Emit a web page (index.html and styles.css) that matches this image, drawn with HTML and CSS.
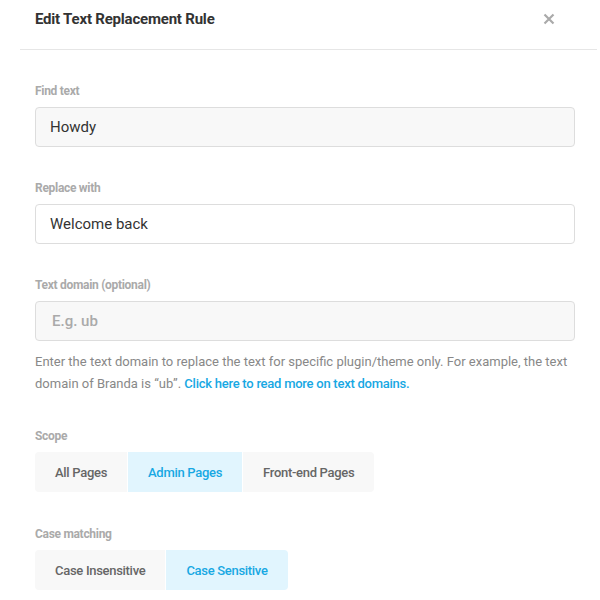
FILE: index.html
```html
<!DOCTYPE html>
<html>
<head>
<meta charset="utf-8">
<link rel="stylesheet" href="styles.css">
</head>
<body>
<div class="modal">
  <div class="header">
    <h1 class="title">Edit Text Replacement Rule</h1>
    <button class="close" aria-label="Close">
      <svg width="12" height="12" viewBox="0 0 12 12"><path d="M1.5 1.5 L10.5 10.5 M10.5 1.5 L1.5 10.5" stroke="#aaa" stroke-width="2.2" stroke-linecap="butt"/></svg>
    </button>
  </div>
  <div class="body">
    <div class="field">
      <label class="label">Find text</label>
      <div class="input filled">Howdy</div>
    </div>
    <div class="field">
      <label class="label">Replace with</label>
      <div class="input white">Welcome back</div>
    </div>
    <div class="field">
      <label class="label">Text domain (optional)</label>
      <div class="input filled placeholder">E.g. ub</div>
      <p class="desc">Enter the text domain to replace the text for specific plugin/theme only. For example, the text domain of Branda is “ub”. <a class="link" href="#">Click here to read more on text domains.</a></p>
    </div>
    <div class="field field-tabs">
      <label class="label">Scope</label>
      <div class="tabs">
        <span class="tab">All Pages</span>
        <span class="tab active">Admin Pages</span>
        <span class="tab">Front-end Pages</span>
      </div>
    </div>
    <div class="field">
      <label class="label">Case matching</label>
      <div class="tabs">
        <span class="tab">Case Insensitive</span>
        <span class="tab active">Case Sensitive</span>
      </div>
    </div>
  </div>
</div>
</body>
</html>
```
FILE: styles.css
```css
* { box-sizing: border-box; }
html, body { margin: 0; padding: 0; background: #fff; }
body { font-family: Roboto, "Liberation Sans", sans-serif; color: #333; }
.modal { padding-left: 20px; width: 597px; }
.header {
  display: flex; align-items: center; justify-content: space-between;
  height: 50px; padding: 0 42px 12px 15px;
  border-bottom: 1px solid #e6e6e6;
}
.title { margin: 0; font-size: 15px; font-weight: 700; color: #333; letter-spacing: -0.2px; }
.close { border: 0; background: none; padding: 0; width: 12px; height: 12px; display: flex; }
.body { padding: 33px 22px 0 15px; }
.field { margin-bottom: 33px; }
.field-tabs { margin-bottom: 34px; }
.label { display: block; font-size: 12px; line-height: 16px; font-weight: 700; color: #aaa; margin-bottom: 8px; letter-spacing: -0.3px; }
.input {
  height: 40px; border: 1px solid #ddd; border-radius: 4px;
  padding: 0 14px; display: flex; align-items: center;
  font-size: 15px; color: #333;
}
.filled { background: #f8f8f8; }
.white { background: #fff; }
.placeholder { color: #aaa; font-weight: 500; padding-left: 16px; }
.desc { margin: 10px 0 0; font-size: 13px; line-height: 22px; color: #888; }
.link { color: #17a8e3; font-weight: 500; text-decoration: none; letter-spacing: -0.25px; }
.tabs { display: flex; gap: 1px; }
.tab {
  height: 40px; display: flex; align-items: center; padding: 0 20px;
  background: #f8f8f8; color: #666; font-size: 13px; font-weight: 500; letter-spacing: -0.3px;
}
.tab:first-child { border-radius: 4px 0 0 4px; }
.tab:last-child { border-radius: 0 4px 4px 0; }
.tab.active { background: #e1f5fe; color: #17a8e3; }
```
